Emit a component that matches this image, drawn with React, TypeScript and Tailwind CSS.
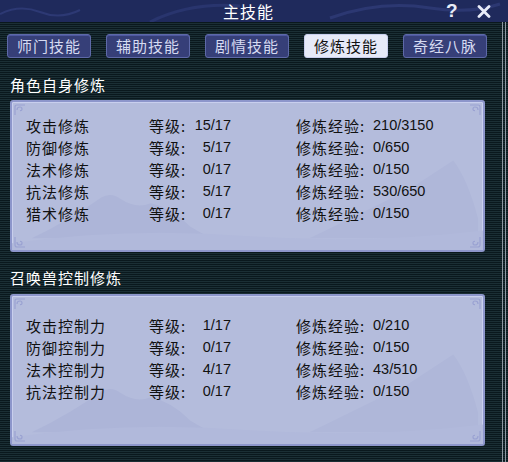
import React from 'react';

const cjk = "font-['Noto_Sans_CJK_SC','Noto_Sans',sans-serif]";
const num = "font-['Liberation_Sans','Noto_Sans_CJK_SC',sans-serif]";

const tabs = ['师门技能', '辅助技能', '剧情技能', '修炼技能', '奇经八脉'];

const selfRows = [
    { name: '攻击修炼', level: '15/17', exp: '210/3150' },
    { name: '防御修炼', level: '5/17', exp: '0/650' },
    { name: '法术修炼', level: '0/17', exp: '0/150' },
    { name: '抗法修炼', level: '5/17', exp: '530/650' },
    { name: '猎术修炼', level: '0/17', exp: '0/150' },
];

const petRows = [
    { name: '攻击控制力', level: '1/17', exp: '0/210' },
    { name: '防御控制力', level: '0/17', exp: '0/150' },
    { name: '法术控制力', level: '4/17', exp: '43/510' },
    { name: '抗法控制力', level: '0/17', exp: '0/150' },
];

function Corner({ className }: { className: string }) {
    return (
        <svg className={`absolute h-[12px] w-[12px] ${className}`} viewBox="0 0 12 12">
            <path d="M1 11 V3 Q1 1 3 1 H11 M3 6 Q3 3 6 3 Q8 3 8 5 Q8 7 6 6.5" fill="none" stroke="#9aa2d2" strokeWidth="1.2" />
        </svg>
    );
}

function Panel({ rows, top }: { rows: typeof selfRows; top: string }) {
    return (
        <div className={`relative ml-[10px] h-[152px] w-[475px] overflow-hidden rounded-[3px] border-2 border-[#8d96cb] bg-[#b4bcdc] shadow-[inset_0_0_0_1px_#c9cfee] ${top}`}>
            {/* faint mountains */}
            <svg className="absolute inset-0 h-full w-full" viewBox="0 0 475 152" preserveAspectRatio="none">
                <path d="M20 140 Q60 120 90 98 Q100 92 110 100 Q125 110 140 104 Q160 108 180 128 L200 140 Z" fill="#adb5d8" />
                <path d="M300 140 Q360 110 400 90 Q430 70 445 60 Q460 80 470 120 L470 140 Z" fill="#afb7d9" />
                <path d="M0 145 Q120 128 240 138 Q360 146 475 132 L475 152 L0 152 Z" fill="#b1b9db" />
            </svg>
            <Corner className="left-[2px] top-[2px]" />
            <Corner className="left-[2px] bottom-[2px] -scale-y-100" />
            <Corner className="right-[2px] top-[2px] -scale-x-100" />
            <Corner className="right-[2px] bottom-[2px] -scale-100" />
            <div className="relative flex flex-col">
                {rows.map((r) => (
                    <div key={r.name} className="flex h-[22px] items-center pl-[14px] text-[#111]">
                        <span className={`w-[123px] text-[15px] tracking-[1px] ${cjk}`}>{r.name}</span>
                        <div className="flex w-[82px] items-center justify-between">
                            <span className={`text-[15px] tracking-[1px] ${cjk}`}>等级:</span>
                            <span className={`text-[14.5px] ${num}`}>{r.level}</span>
                        </div>
                        <span className={`ml-[65px] w-[77px] text-[15px] tracking-[1px] ${cjk}`}>修炼经验:</span>
                        <span className={`text-[14.5px] ${num}`}>{r.exp}</span>
                    </div>
                ))}
            </div>
        </div>
    );
}

export default function App() {
    return (
        <div className="flex h-[462px] w-[508px] flex-col overflow-hidden bg-[repeating-linear-gradient(180deg,#0a181d_0px,#0a181d_1px,#1b2f35_1px,#1b2f35_2px)]">
            {/* Title bar */}
            <div className="relative flex h-[22px] shrink-0 items-center bg-[#1f2a5c]">
                <svg className="absolute inset-0 h-full w-full" viewBox="0 0 508 22" preserveAspectRatio="none">
                    <path d="M0 14 Q20 4 40 12 Q60 20 80 10" fill="none" stroke="#2d3974" strokeWidth="2" />
                    <path d="M150 22 Q190 2 240 6" fill="none" stroke="#29356e" strokeWidth="3" />
                    <path d="M330 18 Q380 0 430 8 Q470 14 500 4" fill="none" stroke="#2c3872" strokeWidth="3" />
                </svg>
                <div className={`relative flex-1 pl-[223px] text-[16px] leading-[22px] tracking-[1px] text-white ${cjk}`}>主技能</div>
                <span className={`relative mr-[21px] w-[10px] text-center text-[19px] font-bold leading-[22px] text-[#e8ecf8] ${num}`}>?</span>
                <svg className="relative mr-[17px] h-[13px] w-[14px]" viewBox="0 0 14 13">
                    <path d="M2 1.5 L12 11.5 M12 1.5 L2 11.5" stroke="#e8ecf8" strokeWidth="2.8" strokeLinecap="round" />
                </svg>
            </div>

            <div className="flex flex-1">
                <div className="flex w-[502px] flex-col">
                    {/* Tabs */}
                    <div className="mt-[12px] flex gap-[15px] pl-[7px]">
                        {tabs.map((t) => {
                            const active = t === '修炼技能';
                            return (
                                <div
                                    key={t}
                                    className={`flex h-[24px] w-[84px] items-center justify-center rounded-[3px] border text-[15px] tracking-[1px] ${cjk} ${
                                        active
                                            ? 'border-[#c9cfee] bg-[#e6eaf8] text-[#111]'
                                            : 'border-[#5e69a8] bg-[#363f78] text-[#d6dbf2] shadow-[inset_0_1px_0_#4d58a0]'
                                    }`}
                                >
                                    {t}
                                </div>
                            );
                        })}
                    </div>

                    <div className={`ml-[10px] mt-[17px] h-[20px] text-[15px] leading-[20px] tracking-[1px] text-white ${cjk}`}>角色自身修炼</div>
                    <Panel rows={selfRows} top="mt-[5px] pt-[13px]" />

                    <div className={`ml-[10px] mt-[16px] h-[20px] text-[15px] leading-[20px] tracking-[1px] text-white ${cjk}`}>召唤兽控制修炼</div>
                    <Panel rows={petRows} top="mt-[6px] pt-[19px]" />
                </div>
                <div className="w-[4px] border-x border-[#8a96a0]" />
            </div>
        </div>
    );
}
